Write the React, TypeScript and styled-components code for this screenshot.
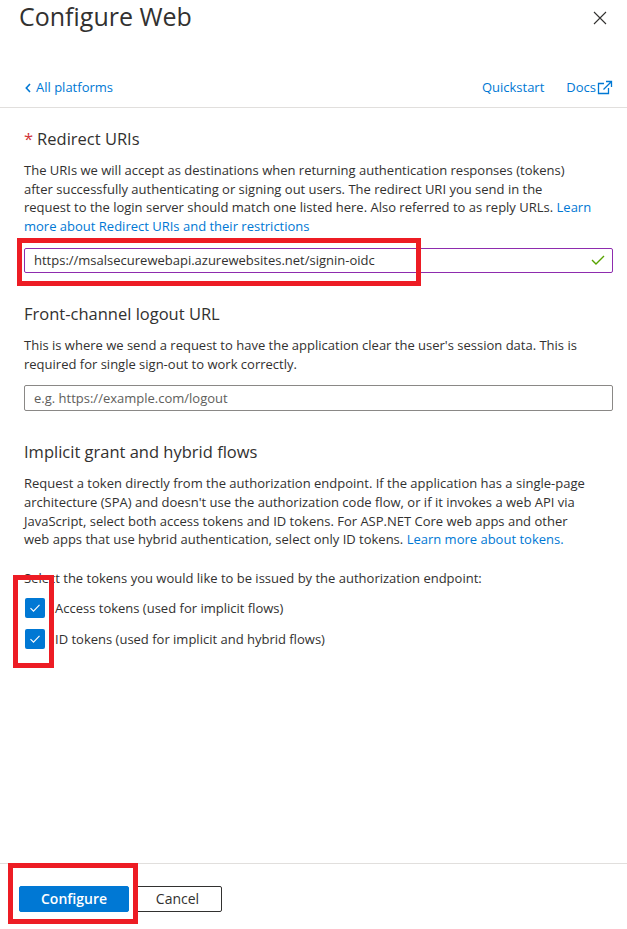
import React from 'react';
import styled, { createGlobalStyle } from 'styled-components';

const GlobalStyle = createGlobalStyle`
  html, body {
    margin: 0;
    padding: 0;
    background: #ffffff;
  }
  body {
    font-family: 'Open Sans', 'Noto Sans', Arial, sans-serif;
    color: #323130;
  }
  * {
    box-sizing: border-box;
  }
`;

const Page = styled.div`
  width: 100%;
  height: 929px;
  display: flex;
  flex-direction: column;
  background: #ffffff;
`;

const Header = styled.div`
  display: flex;
  justify-content: space-between;
  align-items: flex-start;
  padding: 0 20px 0 19px;
  height: 32px;
`;

const Title = styled.h1`
  margin: 0;
  font-size: 25px;
  font-weight: 500;
  line-height: 32px;
  color: #323130;
`;

const CloseButton = styled.button`
  margin-top: 11px;
  padding: 0;
  border: none;
  background: none;
  width: 14px;
  height: 14px;
  display: flex;
  cursor: pointer;
`;

const NavRow = styled.div`
  display: flex;
  align-items: center;
  padding: 46px 14px 10px 25px;
  border-bottom: 1px solid #e1dfdd;
`;

const NavLink = styled.a`
  display: inline-flex;
  align-items: center;
  gap: 5px;
  font-size: 13px;
  line-height: 19px;
  color: #0078d4;
  text-decoration: none;
  cursor: pointer;
`;

const NavRight = styled.div`
  margin-left: auto;
  display: flex;
  align-items: center;
  gap: 22px;
`;

const DocsLink = styled(NavLink)`
  gap: 1px;
`;

const Content = styled.div`
  flex: 1;
  padding: 0 14px 0 24px;
`;

const Section = styled.section<{ $first?: boolean }>`
  margin-top: ${(p) => (p.$first ? '19px' : '29px')};
`;

const Heading = styled.h2`
  margin: 0 0 10px;
  font-size: 16.5px;
  font-weight: 400;
  line-height: 24px;
  color: #323130;
`;

const Required = styled.span`
  color: #d13438;
  margin-right: 4px;
`;

const Paragraph = styled.p<{ $gap?: number }>`
  margin: 0;
  font-size: 13px;
  line-height: 18.7px;
  white-space: nowrap;
  color: #323130;
  & + & {
    margin-top: ${(p) => p.$gap ?? 0}px;
  }
`;

const InlineLink = styled.a`
  color: #0078d4;
  text-decoration: none;
`;

const FieldWrap = styled.div`
  position: relative;
  margin-top: 12px;
`;

const TextField = styled.div<{ $valid?: boolean; $height: number }>`
  display: flex;
  align-items: center;
  height: ${(p) => p.$height}px;
  padding: 0 7px 0 9px;
  border: 1px solid ${(p) => (p.$valid ? '#8e2cae' : '#8a8886')};
  border-radius: 2px;
  font-size: 13px;
  background: #ffffff;
`;

const FieldValue = styled.span<{ $placeholder?: boolean }>`
  flex: 1;
  color: ${(p) => (p.$placeholder ? '#605e5c' : '#323130')};
  white-space: nowrap;
`;

const Highlight = styled.div<{ $left: number; $top: number; $w: number; $h: number }>`
  position: absolute;
  left: ${(p) => p.$left}px;
  top: ${(p) => p.$top}px;
  width: ${(p) => p.$w}px;
  height: ${(p) => p.$h}px;
  border: 5px solid #ed1c24;
  pointer-events: none;
  z-index: 2;
`;

const TokenList = styled.div`
  position: relative;
  margin-top: 10px;
  display: flex;
  flex-direction: column;
  gap: 11px;
`;

const CheckRow = styled.label`
  display: flex;
  align-items: center;
  gap: 10px;
  margin-left: 1px;
  font-size: 13px;
  line-height: 20px;
  color: #323130;
`;

const CheckBox = styled.span`
  width: 20px;
  height: 20px;
  border-radius: 2px;
  background: #0078d4;
  display: flex;
  align-items: center;
  justify-content: center;
  flex-shrink: 0;
`;

const Footer = styled.div`
  height: 66px;
  border-top: 1px solid #e1dfdd;
  padding: 22px 19px 0;
  display: flex;
  align-items: flex-start;
  gap: 4px;
`;

const ButtonWrap = styled.div`
  position: relative;
`;

const Button = styled.button<{ $primary?: boolean }>`
  height: 26px;
  padding: 0;
  width: ${(p) => (p.$primary ? '110px' : '89px')};
  border-radius: 2px;
  font-family: 'Open Sans', 'Noto Sans', Arial, sans-serif;
  font-size: 14px;
  line-height: 24px;
  font-weight: ${(p) => (p.$primary ? 600 : 400)};
  color: ${(p) => (p.$primary ? '#ffffff' : '#323130')};
  background: ${(p) => (p.$primary ? '#0078d4' : '#ffffff')};
  border: 1px solid ${(p) => (p.$primary ? '#0078d4' : '#323130')};
  cursor: pointer;
`;

const ChevronLeft = () => (
  <svg width="6" height="10" viewBox="0 0 6 10">
    <path d="M5 1 L1.3 5 L5 9" fill="none" stroke="#0078d4" strokeWidth="1.6" />
  </svg>
);

const ExternalIcon = () => (
  <svg width="16" height="15" viewBox="0 0 16 15">
    <path d="M7 3.5 H1.5 V13.5 H11.5 V8" fill="none" stroke="#0078d4" strokeWidth="1.3" />
    <path d="M9 1.5 H14.5 V7 M14.5 1.5 L6.5 9.5" fill="none" stroke="#0078d4" strokeWidth="1.3" />
  </svg>
);

const CloseIcon = () => (
  <svg width="14" height="14" viewBox="0 0 14 14">
    <path d="M1 1 L13 13 M13 1 L1 13" stroke="#323130" strokeWidth="1.1" />
  </svg>
);

const ValidIcon = () => (
  <svg width="14" height="10" viewBox="0 0 14 10">
    <path d="M1 5 L5 9 L13 1" fill="none" stroke="#57a300" strokeWidth="1.4" />
  </svg>
);

const CheckMark = () => (
  <svg width="12" height="10" viewBox="0 0 12 10">
    <path d="M1.5 5.2 L4.5 8.2 L10.5 1.8" fill="none" stroke="#ffffff" strokeWidth="1.1" />
  </svg>
);

const tokens = [
  'Access tokens (used for implicit flows)',
  'ID tokens (used for implicit and hybrid flows)',
];

const App: React.FC = () => {
  return (
    <Page>
      <GlobalStyle />
      <Header>
        <Title>Configure Web</Title>
        <CloseButton aria-label="Close">
          <CloseIcon />
        </CloseButton>
      </Header>
      <NavRow>
        <NavLink>
          <ChevronLeft />
          All platforms
        </NavLink>
        <NavRight>
          <NavLink>Quickstart</NavLink>
          <DocsLink>
            Docs
            <ExternalIcon />
          </DocsLink>
        </NavRight>
      </NavRow>
      <Content>
        <Section $first>
          <Heading>
            <Required>*</Required>Redirect URIs
          </Heading>
          <Paragraph>
            The URIs we will accept as destinations when returning authentication responses (tokens)
            <br />
            after successfully authenticating or signing out users. The redirect URI you send in the
            <br />
            request to the login server should match one listed here. Also referred to as reply URLs.{' '}
            <InlineLink>
              Learn
              <br />
              more about Redirect URIs and their restrictions
            </InlineLink>
          </Paragraph>
          <FieldWrap>
            <TextField $valid $height={25}>
              <FieldValue>https://msalsecurewebapi.azurewebsites.net/signin-oidc</FieldValue>
              <ValidIcon />
            </TextField>
            <Highlight $left={-7} $top={-10} $w={404} $h={48} />
          </FieldWrap>
        </Section>

        <Section>
          <Heading>Front-channel logout URL</Heading>
          <Paragraph>
            This is where we send a request to have the application clear the user's session data. This is
            <br />
            required for single sign-out to work correctly.
          </Paragraph>
          <FieldWrap>
            <TextField $height={26}>
              <FieldValue $placeholder>e.g. https://example.com/logout</FieldValue>
            </TextField>
          </FieldWrap>
        </Section>

        <Section>
          <Heading>Implicit grant and hybrid flows</Heading>
          <Paragraph>
            Request a token directly from the authorization endpoint. If the application has a single-page
            <br />
            architecture (SPA) and doesn't use the authorization code flow, or if it invokes a web API via
            <br />
            JavaScript, select both access tokens and ID tokens. For ASP.NET Core web apps and other
            <br />
            web apps that use hybrid authentication, select only ID tokens.{' '}
            <InlineLink>Learn more about tokens.</InlineLink>
          </Paragraph>
          <Paragraph $gap={20}>
            Select the tokens you would like to be issued by the authorization endpoint:
          </Paragraph>
          <TokenList>
            {tokens.map((t) => (
              <CheckRow key={t}>
                <CheckBox>
                  <CheckMark />
                </CheckBox>
                {t}
              </CheckRow>
            ))}
            <Highlight $left={-11} $top={-23} $w={41} $h={93} />
          </TokenList>
        </Section>
      </Content>
      <Footer>
        <ButtonWrap>
          <Button $primary>Configure</Button>
          <Highlight $left={-11} $top={-23} $w={130} $h={61} />
        </ButtonWrap>
        <Button>Cancel</Button>
      </Footer>
    </Page>
  );
};

export default App;
